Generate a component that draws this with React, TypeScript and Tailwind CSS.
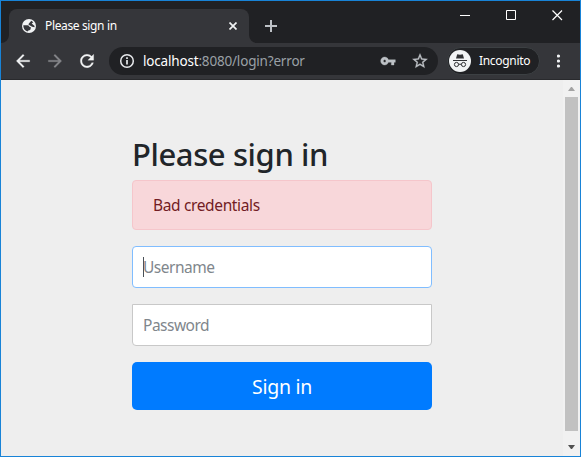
import type { ReactNode } from "react";

const font = "font-['Noto_Sans','Open_Sans',sans-serif]";

function TabFoot({ flip = false }: { flip?: boolean }) {
  return (
    <svg width="8" height="8" className={flip ? "-scale-x-100" : ""}>
      <path d="M8 0v8H0A8 8 0 0 0 8 0z" fill="#35363a" />
    </svg>
  );
}

function TabStrip() {
  return (
    <div className="flex h-[42px] bg-[#202124]">
      <div className="flex items-end">
        <TabFoot />
        <div className="flex h-[34px] w-[240px] items-center rounded-t-lg bg-[#35363a] pl-[12px] pr-[12px]">
          <svg width="16" height="16" viewBox="0 0 16 16" className="mr-2 shrink-0">
            <circle cx="8" cy="8" r="7" fill="#f1f3f4" />
            <path d="M2.300 7.300h4.200c1.200 0 1.900.700 1.900 1.700h1.300v1.700c0 .900-.700 1.500-1.900 1.600l-1.400 1.100c-2.600-.700-4.300-3.200-4.100-6.100zM10.300 2.800l2 1.500-1.600 1.100 2.900 2.600-.200 1.200-2.300-.400-3-1.700c-.700-.400-.700-1.200-.200-1.700z" fill="#35363a" />
          </svg>
          <span className="grow whitespace-nowrap text-xs tracking-[-0.36px] text-white">Please sign in</span>
          <svg width="8" height="8" viewBox="0 0 8 8" stroke="#f1f3f4" strokeWidth="1.7">
            <path d="M.5.500l7 7m0-7l-7 7" />
          </svg>
        </div>
        <TabFoot flip />
      </div>
      <svg width="12" height="12" viewBox="0 0 12 12" stroke="#bdc1c6" strokeWidth="2" className="ml-2 mt-[19px]">
        <path d="M6 0v12M0 6h12" />
      </svg>
      <div className="ml-auto mr-[17px] mt-[9px] flex h-[11px] gap-[36px]">
        <svg width="10" height="11" fill="#fff"><path d="M0 5h10v1H0z" /></svg>
        <svg width="10" height="11" fill="none" stroke="#fff"><path d="M.5.500h9v9h-9z" /></svg>
        <svg width="11" height="11" fill="none" stroke="#fff" strokeWidth="1.200"><path d="M.5.500l9.500 9.500m0-9.500L.5 10" /></svg>
      </div>
    </div>
  );
}

function ToolIcon({ d, className }: { d: string; className: string }) {
  return (
    <svg width="20" height="20" viewBox="0 0 24 24" fill="currentColor" stroke="currentColor" strokeWidth="0.300" className={className}>
      <path d={d} />
    </svg>
  );
}

function Toolbar() {
  return (
    <div className="flex h-[37px] items-center border-b border-[#292a2d] bg-[#35363a]">
      <ToolIcon className="ml-3 text-[#f1f3f4]" d="M20 11H7.830l5.590-5.590L12 4l-8 8 8 8 1.410-1.410L7.830 13H20v-2z" />
      <ToolIcon className="ml-3 text-[#85868a]" d="M12 4l-1.410 1.410L16.170 11H4v2h12.170l-5.580 5.590L12 20l8-8z" />
      <ToolIcon className="ml-3 text-[#f1f3f4]" d="M17.650 6.350C16.200 4.900 14.210 4 12 4c-4.420 0-7.990 3.580-7.990 8s3.570 8 7.990 8c3.730 0 6.840-2.550 7.730-6h-2.080c-.820 2.330-3.040 4-5.650 4-3.310 0-6-2.690-6-6s2.690-6 6-6c1.660 0 3.140.690 4.220 1.780L13 11h7V4l-2.350 2.350z" />
      <div className="ml-3 flex h-7 w-[329px] items-center rounded-full bg-[#202124] pl-[10px] pr-[9px]">
        <svg width="16" height="16" viewBox="0 0 16 16" fill="none" stroke="#e8eaed" strokeWidth="1.500">
          <circle cx="8" cy="8" r="6.300" />
          <path d="M8 7v4.500M8 4.300v1.700" strokeWidth="1.700" />
        </svg>
        <span className="ml-2 grow whitespace-nowrap text-[13.5px] tracking-[-0.180px] text-[#9aa0a6]">
          <span className="text-white">localhost</span>:8080/login?error
        </span>
        <svg width="16" height="16" viewBox="0 0 24 24" fill="#bdc1c6" stroke="#bdc1c6" strokeWidth="0.500">
          <path fillRule="evenodd" d="M12.650 10C11.830 7.670 9.610 6 7 6c-3.310 0-6 2.690-6 6s2.690 6 6 6c2.610 0 4.830-1.670 5.650-4H17v4h4v-4h2v-4H12.650zM7 14c-1.100 0-2-.900-2-2s.900-2 2-2 2 .900 2 2-.900 2-2 2z" />
        </svg>
        <svg width="18" height="18" viewBox="0 0 24 24" fill="#bdc1c6" stroke="#bdc1c6" strokeWidth="0.400" className="ml-[15px]">
          <path d="M22 9.240l-7.190-.620L12 2 9.190 8.630 2 9.240l5.460 4.730L5.820 21 12 17.270 18.180 21l-1.630-7.030L22 9.240zM12 15.400l-3.760 2.270 1-4.280-3.320-2.880 4.380-.380L12 6.100l1.710 4.040 4.380.380-3.320 2.880 1 4.280L12 15.400z" />
        </svg>
      </div>
      <div className="ml-[9px] flex h-7 w-[93px] items-center rounded-full border border-[#3c4043] bg-[#202124] pl-px">
        <svg width="22" height="22" viewBox="0 0 22 22" fill="none">
          <circle cx="11" cy="11" r="11" fill="#f1f3f4" />
          <path d="M7 8.500l1.200-4.300 2.800.500 2.800-.500L15 8.500zM4 10h14v1H4z" fill="#303134" />
          <circle cx="7.500" cy="14.500" r="2.100" stroke="#303134" />
          <circle cx="14.500" cy="14.500" r="2.100" stroke="#303134" />
          <path d="M9.600 14.500q1.400-.800 2.800 0" stroke="#303134" />
        </svg>
        <span className="ml-2 text-xs tracking-[-0.32px] text-white">Incognito</span>
      </div>
      <svg width="4" height="14" fill="#f1f3f4" className="ml-[17px]">
        <circle cx="1.500" cy="2" r="1.600" /><circle cx="1.500" cy="7" r="1.600" /><circle cx="1.500" cy="12" r="1.600" />
      </svg>
    </div>
  );
}

function Field({ label, focused = false, children }: { label: string; focused?: boolean; children?: ReactNode }) {
  return (
    <div className={`flex h-[42px] items-center border bg-white px-[10px] text-[#80868c] ${focused ? "rounded border-[#80bdff]" : "rounded-b border-[#c8c8c8]"}`}>
      {children}
      <span className="pt-0.5 text-[15.5px] tracking-[-0.500px]">{label}</span>
    </div>
  );
}

function ScrollBar() {
  return (
    <div className="flex w-[17px] flex-col items-center justify-between bg-[#f1f1f1] pb-[7px] pt-[7px]">
      <svg width="7" height="4" fill="#a3a3a3" className="shrink-0"><path d="M3 0h1l3 4H0z" /></svg>
      <div className="mb-auto mt-[6px] h-[334px] w-[13px] bg-[#c1c1c1]" />
      <svg width="7" height="4" fill="#505050" className="shrink-0"><path d="M0 0h7L4 4H3z" /></svg>
    </div>
  );
}

export default function App() {
  return (
    <div className={`flex h-[457px] w-[581px] flex-col overflow-hidden border border-[#1883d7] ${font}`}>
      <TabStrip />
      <Toolbar />
      <div className="flex min-h-0 grow">
        <main className="grow bg-[#eee] pl-[131px] pt-[56px]">
          <div className="w-[300px]">
            <h2 className="mb-2 h-9 whitespace-nowrap text-[31px] font-medium leading-[36px] tracking-[-0.4px] text-[#212529]">Please sign in</h2>
            <div className="mb-4 flex h-[50px] items-center rounded border border-[#f5c6cb] bg-[#f8d7da] px-5 pt-0.5 text-[15.5px] tracking-[-0.36px] text-[#721c24]">Bad credentials</div>
            <div className="flex flex-col gap-4">
              <Field label="Username" focused>
                <span className="-mr-px h-5 w-px bg-[#495057]" />
              </Field>
              <Field label="Password" />
              <button className="h-12 rounded-[5px] bg-[#007bff] pt-0.5 text-[19.5px] tracking-[-0.3px] text-white">Sign in</button>
            </div>
          </div>
        </main>
        <ScrollBar />
      </div>
    </div>
  );
}
